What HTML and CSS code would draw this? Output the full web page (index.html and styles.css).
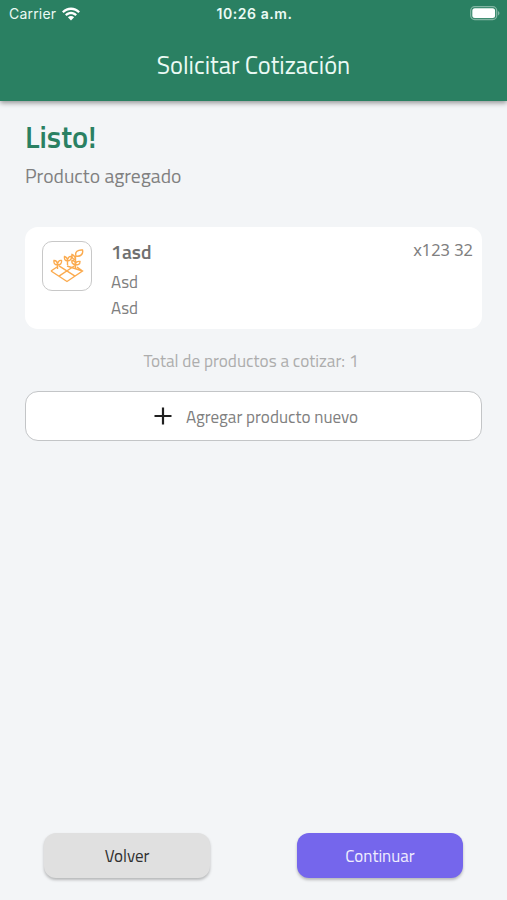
FILE: index.html
```html
<!DOCTYPE html>
<html lang="es">

<head>
    <meta charset="UTF-8">
    <meta name="viewport" content="width=device-width, initial-scale=1.0">
    <title>Solicitar Cotización</title>
    <link rel="stylesheet" href="styles.css">
</head>

<body>

    <header class="header">
        <div class="status-bar">
            <div class="carrier">
                <span>Carrier</span>
                <svg class="wifi" viewBox="0 0 18 14" width="18" height="14">
                    <path d="M0 4.4C5 -.8 13 -.8 18 4.4L16.3 6.1C12.2 2 5.8 2 1.7 6.1Z" />
                    <path d="M3 7.4C6.3 4 11.7 4 15 7.4L13.3 9.1C10.9 6.7 7.1 6.7 4.7 9.1Z" />
                    <path d="M5.9 10.3C7.6 8.6 10.4 8.6 12.1 10.3L9 13.5Z" />
                </svg>
            </div>
            <span class="time">10:26 a.m.</span>
            <svg class="battery" viewBox="0 0 30 15" width="30" height="15">
                <rect class="battery-case" x=".7" y=".7" width="26" height="12.8" rx="4" />
                <rect x="2.3" y="2.3" width="22.8" height="9.6" rx="2.5" />
                <path class="battery-tip" d="M28 5C30 6 30 8.5 28 9.5Z" />
            </svg>
        </div>
        <h1 class="title">Solicitar Cotización</h1>
    </header>

    <main class="content">
        <h2 class="heading">Listo!</h2>
        <p class="subtitle">Producto agregado</p>

        <section class="product">
            <div class="product-icon">
                <svg viewBox="0 0 36 36" width="36" height="36">
                    <!-- Parcela -->
                    <path d="M2 23L8 19M2 23L18 33.5L33.5 23L28 19M10 28.2L26 17.5M18 18L33.5 23M10 17.8L26 28.2" />
                    <!-- Plantas -->
                    <path d="M8.5 21V14.5M8.5 17C5.5 17 4.5 15 5 12.5C7.5 12.5 8.5 14.5 8.5 17C8.5 14 10 12 12.5 12.5C13 15 11.5 17 8.5 17" />
                    <path d="M18.5 17V10.5M18.5 13C16 13 15 11 15.5 8.5C17.5 9 18.5 10.5 18.5 13C18.5 10 20 8 22.5 8.5C22.5 11.5 21 13 18.5 13" />
                    <path d="M26.5 20V8M26.5 11.5C23.5 11.5 22.5 9 23 6.5C25.5 7.5 26.5 9 26.5 11.5M26.5 16.5C23.5 16.5 22.5 14.5 23 12.5C25.5 12.5 26.5 14 26.5 16.5C26.5 14 28.5 13 31 13.5C31 16 29.5 17.5 26.5 16.5" />
                    <path d="M27 8C25.5 4 29 1.5 33.5 2C34.5 6 31.5 9 27 8" />
                </svg>
            </div>
            <div class="product-info">
                <h3 class="product-name">1asd</h3>
                <p class="detail">Asd</p>
                <p class="detail">Asd</p>
            </div>
            <span class="quantity">x123 32</span>
        </section>

        <p class="total">Total de productos a cotizar: 1</p>

        <button type="button" class="btn-add">
            <svg class="plus" viewBox="0 0 18 18" width="18" height="18">
                <path d="M9 .5V17.5M.5 9H17.5" />
            </svg>
            <span>Agregar producto nuevo</span>
        </button>
    </main>

    <footer class="actions">
        <button type="button" class="btn btn-back">Volver</button>
        <button type="button" class="btn btn-next">Continuar</button>
    </footer>

</body>

</html>
```
FILE: styles.css
```css
* {
    margin: 0;
    padding: 0;
    box-sizing: border-box;
}

body {
    font-family: "Titillium Web", Roboto, sans-serif;
    font-size: 17px;
    background-color: #f3f5f7;
    color: #808080;
    height: 100vh;
    display: flex;
    flex-direction: column;
    overflow: hidden;
}

/* ENCABEZADO */
.header {
    height: 101px;
    background-color: #2a8062;
    color: #ebfaf4;
    box-shadow: 0 2px 5px rgba(0, 0, 0, 0.4);
}

.status-bar {
    display: grid;
    grid-template-columns: 1fr auto 1fr;
    align-items: center;
    height: 27px;
    padding: 0 7px 0 9px;
    font-family: Inter, sans-serif;
    font-size: 14px;
}

.carrier {
    display: flex;
    align-items: center;
    gap: 6px;
    letter-spacing: 0.2px;
}

.wifi,
.battery {
    fill: #fff;
}

.time {
    font-weight: 600;
    letter-spacing: 0.55px;
}

.battery {
    justify-self: end;
}

.battery-case {
    fill: none;
    stroke: #82b5a3;
    stroke-width: 1.3;
}

.battery-tip {
    fill: #82b5a3;
}

.title {
    font-size: 24.5px;
    font-weight: 400;
    line-height: 30px;
    text-align: center;
    margin-top: 23px;
}

/* CONTENIDO */
.content {
    flex: 1;
    padding: 19px 25px 0;
}

.heading {
    font-size: 30.5px;
    font-weight: 600;
    line-height: 34px;
    color: #2a8062;
}

.subtitle {
    font-size: 19.6px;
    line-height: 24px;
    margin-top: 10px;
}

.product {
    display: flex;
    height: 102px;
    margin-top: 39px;
    padding: 14px 9px 0 17px;
    background-color: #fff;
    border-radius: 13px;
}

.product-icon {
    display: flex;
    align-items: center;
    justify-content: center;
    width: 50px;
    height: 50px;
    border: 1px solid #c8c8c8;
    border-radius: 10px;
}

.product-icon svg {
    fill: none;
    stroke: #fbab4f;
    stroke-width: 1.4;
}

.product-info {
    flex: 1;
    margin-left: 19px;
    line-height: 26px;
}

.product-name {
    font-size: 19.5px;
    font-weight: 600;
    line-height: 24px;
    margin: -1px 0 5px;
    color: #707070;
}

.quantity {
    font-family: "Noto Sans", sans-serif;
    font-size: 16.4px;
    line-height: 18px;
}

.total {
    font-size: 17.2px;
    margin-top: 21px;
    padding-right: 5px;
    line-height: 22px;
    text-align: center;
    color: #adadad;
}

.btn-add {
    display: flex;
    align-items: center;
    justify-content: center;
    gap: 14px;
    width: 100%;
    height: 50px;
    margin-top: 19px;
    padding: 0 0 0 5px;
    font: inherit;
    font-size: 17.1px;
    line-height: 26px;
    color: #808080;
    background-color: #fff;
    border: 1px solid #c3c5c7;
    border-radius: 13px;
}

.btn-add span {
    padding-top: 1px;
}

.plus {
    stroke: #202020;
    stroke-width: 2.2;
}

/* BOTONES INFERIORES */
.actions {
    display: flex;
    justify-content: space-between;
    padding: 0 44px 22px;
}

.btn {
    width: 166px;
    height: 45px;
    font: inherit;
    border: none;
    border-radius: 12px;
    box-shadow: 0 2px 3px rgba(0, 0, 0, 0.25);
}

.btn-back {
    background-color: #e0e0e0;
    color: #303030;
}

.btn-next {
    background-color: #7566ec;
    color: #f0eefe;
}
```
